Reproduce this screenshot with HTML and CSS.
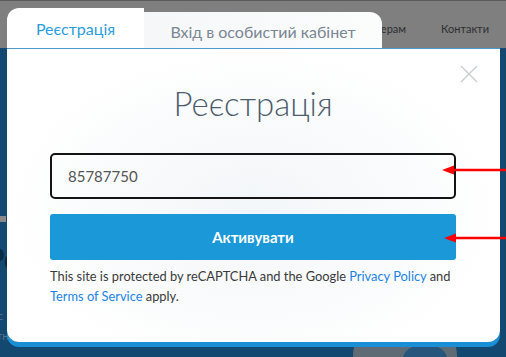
FILE: index.html
```html
<!DOCTYPE html>
<html lang="uk">
<head>
    <meta charset="UTF-8">
    <meta name="viewport" content="width=device-width, initial-scale=1.0">
    <title>Реєстрація</title>
    <link rel="stylesheet" href="styles.css">
</head>
<body>
    <header class="site-header">
        <nav class="site-nav">
            <a href="#">Партнерам</a>
            <a href="#">Контакти</a>
        </nav>
    </header>
    <section class="hero">
        <div class="hero-bar"></div>
        <h2 class="hero-title">Ре</h2>
        <p class="hero-text">Віс<br>Отн</p>
        <div class="hero-circle"></div>
    </section>

    <div class="modal">
        <div class="tabs">
            <button class="tab active">Реєстрація</button>
            <button class="tab">Вхід в особистий кабінет</button>
        </div>
        <div class="modal-body">
            <button class="close" aria-label="Закрити">
                <svg width="18" height="18" viewBox="0 0 18 18">
                    <path d="M1 1 L17 17 M17 1 L1 17" stroke="#c9ccd0" stroke-width="1.4" fill="none"/>
                </svg>
            </button>
            <h1 class="modal-title">Реєстрація</h1>
            <input class="field" type="text" value="85787750">
            <button class="submit">Активувати</button>
            <p class="legal">This site is protected by reCAPTCHA and the Google <a href="#">Privacy Policy</a> and <a href="#">Terms of Service</a> apply.</p>
        </div>
    </div>

    <svg class="pointer pointer-one" width="64" height="10" viewBox="0 0 64 10">
        <path d="M10 5 H64" stroke="#f00" stroke-width="2.5"/>
        <path d="M0 5 L12 0.5 L12 9.5 Z" fill="#f00"/>
    </svg>
    <svg class="pointer pointer-two" width="62" height="10" viewBox="0 0 62 10">
        <path d="M10 5 H62" stroke="#f00" stroke-width="2.5"/>
        <path d="M0 5 L12 0.5 L12 9.5 Z" fill="#f00"/>
    </svg>
</body>
</html>
```

FILE: styles.css
```css
body {
    margin: 0;
    width: 506px;
    height: 357px;
    overflow: hidden;
    position: relative;
    background: #134870;
    font-family: 'Lato', 'Inter', sans-serif;
}
.site-header {
    height: 47px;
    background: #7f7f7f;
    border-top: 1px solid #5a5a5a;
}
.site-nav {
    display: flex;
    justify-content: flex-end;
    gap: 35px;
    padding: 21px 17px 0 0;
}
.site-nav a {
    color: #2f2f2f;
    font-size: 11px;
    text-decoration: none;
}
.hero { height: 309px; position: relative; }
.hero-bar { position: absolute; left: 0; top: 168px; width: 6px; height: 6px; background: #8a8a8a; }
.hero-title { position: absolute; left: -14px; top: 192px; margin: 0; font-size: 30px; color: #0b2a44; }
.hero-text { position: absolute; left: -12px; top: 258px; margin: 0; font-size: 11px; line-height: 20px; color: #5b7388; }
.hero-circle { position: absolute; left: 403px; top: 296px; width: 44px; height: 30px; border-radius: 50%; background: #27557c; box-shadow: -20px 0 0 30px #5e6a74; z-index: 0; }

.modal {
    position: absolute;
    left: 7px;
    top: 8px;
    width: 493px;
    z-index: 2;
}
.tabs {
    display: flex;
    align-items: flex-end;
}
.tab {
    border: none;
    font-family: inherit;
    font-size: 16px;
    cursor: pointer;
    padding: 0;
}
.tab.active {
    width: 137px;
    height: 40px;
    background: #fff;
    color: #2b9ddd;
    border-radius: 12px 0 0 0;
}
.tab:not(.active) {
    width: 238px;
    height: 36px;
    padding-top: 2px;
    background: linear-gradient(90deg, #f6f7f8, #fbfcfc);
    color: #7b8794;
    border-radius: 0 12px 0 0;
}
.modal-body {
    position: relative;
    height: 294px;
    box-sizing: border-box;
    padding: 0 44px 0 43px;
    border-top: 1px solid #4b9bd0;
    border-radius: 0 0 12px 12px;
    background: radial-gradient(ellipse at 50% 55%, #f3f6f9 0%, #fafbfc 45%, #ffffff 70%);
    box-shadow: 0 5px 0 #1a8fd6;
}
.close {
    position: absolute;
    top: 16px;
    right: 22px;
    border: none;
    background: none;
    padding: 0;
    cursor: pointer;
}
.modal-title {
    margin: 0;
    padding-top: 34px;
    height: 70px;
    text-align: center;
    font-size: 33px;
    font-weight: 300;
    color: #4c5d6d;
}
.field {
    display: block;
    width: 100%;
    height: 46px;
    box-sizing: border-box;
    border: 2px solid #141414;
    border-radius: 5px;
    padding: 0 16px;
    font-family: inherit;
    font-size: 15px;
    color: #555;
    background: transparent;
}
.submit {
    display: block;
    width: 100%;
    height: 46px;
    margin-top: 15px;
    border: none;
    border-radius: 3px;
    background: #1a98d8;
    color: #fff;
    font-family: inherit;
    font-size: 15px;
    font-weight: bold;
    cursor: pointer;
}
.legal {
    margin: 6px 0 0;
    font-size: 12.85px;
    line-height: 20px;
    color: #3a3a3a;
}
.legal a { color: #1a84e4; text-decoration: none; }

.pointer { position: absolute; z-index: 3; }
.pointer-one { left: 442px; top: 165px; }
.pointer-two { left: 444px; top: 233px; }
```
